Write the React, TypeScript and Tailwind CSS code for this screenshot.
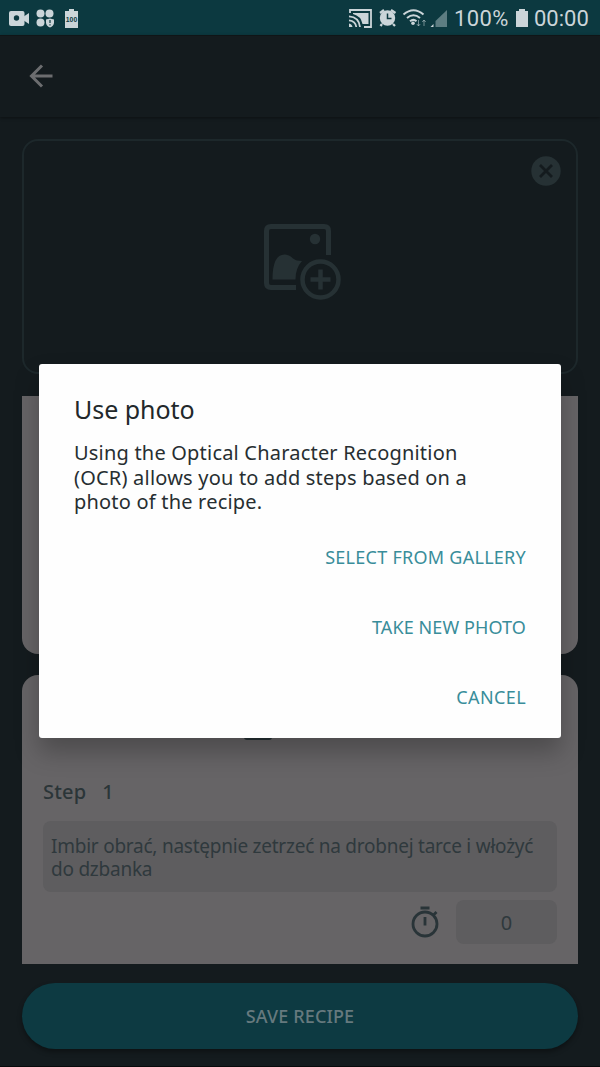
import type { ReactNode } from "react";

function StatusBar() {
  return (
    <div className="flex h-[35px] shrink-0 items-center bg-[#0c3940] text-[#cbd5d9]">
      <svg className="ml-2 h-[35px] w-[76px]" viewBox="8 0 76 35" fill="#cbd5d9">
        <rect x="9" y="11" width="15.5" height="15" rx="2" />
        <path d="M23 17 29 13V24L23 20Z" />
        <circle cx="16.5" cy="18" r="2.7" fill="#0c3940" />
        <circle cx="40.5" cy="13.5" r="4" />
        <circle cx="49.5" cy="13.5" r="4" />
        <circle cx="40.5" cy="22.5" r="4" />
        <path d="M46 19.5 50 18.5 54 19.5V23Q53.5 26 50 27.5Q46.5 26 46 23Z" />
        <path d="M50 20V23M50 24.2V25.5" stroke="#0c3940" strokeWidth="1.2" />
        <path d="M65 11H69V9H74V11H78V28H65Z" />
        <text x="71.5" y="21.5" textAnchor="middle" fontSize="6.8" fontWeight="700" fill="#0c3940" fontFamily="Liberation Sans, sans-serif">100</text>
      </svg>
      <svg className="ml-auto h-[35px] w-[103px]" viewBox="347 0 103 35" fill="none" stroke="#cbd5d9">
        <path d="M350 13V10H371V27H364" strokeWidth="1.8" />
        <path d="M353 14V13H368.500V24H362.500Q361 16 353 14Z" fill="#cbd5d9" stroke="none" />
        <path d="M349 16.3Q359 17 360 27M349 20.3Q355.500 21 356.300 27" strokeWidth="1.8" />
        <path d="M349 23.500Q352 24 352.500 27H349Z" fill="#cbd5d9" stroke="none" />
        <circle cx="387.500" cy="18" r="7.700" fill="#cbd5d9" stroke="none" />
        <path d="M380 13 384 10M391 10 395.500 13M382 24 380.500 26M393 24 395 26" strokeWidth="2.300" />
        <path d="M387.500 13.500V18.500H391.500" stroke="#0c3940" strokeWidth="1.500" />
        <path d="M403.500 14.500Q413.500 6 423.500 14.500M407 18Q413.500 12.500 420 18M410 21.300Q413.500 18.500 416.500 21.300" strokeWidth="2" />
        <circle cx="413" cy="23.300" r="1.800" fill="#cbd5d9" stroke="none" />
        <path d="M418.500 20V26M416.800 24 418.500 26 420.200 24M424 26V20M422.300 22 424 20 425.700 22" strokeWidth="1" opacity=".55" />
        <path d="M433.500 24V27H430.500Z" fill="#cbd5d9" stroke="none" />
        <path d="M447 10V27H435.500V21Z" fill="#5d7d82" stroke="none" />
      </svg>
      <span className="ml-[4px] w-[56px] whitespace-nowrap pt-[3px] font-[Roboto] text-[22px] leading-[32px] tracking-[0.4px]">100%</span>
      <svg className="ml-[6px] h-[35px] w-3" viewBox="516 0 12 35" fill="#cbd5d9">
        <path d="M516 11H519V9H525V11H528V27H516Z" />
      </svg>
      <span className="ml-[6px] w-[66px] whitespace-nowrap pt-[3px] font-[Roboto] text-[22px] leading-[32px]">00:00</span>
    </div>
  );
}

function PhotoCard() {
  return (
    <section className="relative flex h-[235px] shrink-0 items-center justify-center rounded-[16px] border-2 border-[#1d282b]">
      <svg className="ml-1 mt-[8px] h-[80px] w-[80px]" viewBox="262 221 80 80" fill="none" stroke="#263134">
        <path d="M296 287.500H271Q266.500 287.500 266.500 283V231Q266.500 226.500 271 226.500H324Q328.500 226.500 328.500 231V255" strokeWidth="5" />
        <circle cx="315" cy="239" r="5.200" fill="#263134" stroke="none" />
        <path d="M272.500 279.500Q272.500 254 285 254.500Q290 255 293 258.500Q296 261 302 261Q295.500 268 295.500 279.500Z" fill="#263134" stroke="none" />
        <circle cx="320.500" cy="279.500" r="18" strokeWidth="4.500" />
        <path d="M320.500 269.500V289.500M310.500 279.500H330.500" strokeWidth="4.500" />
      </svg>
      <svg className="absolute right-[15px] top-[15px] size-[30px]" viewBox="0 0 30 30">
        <circle cx="15" cy="15" r="14.700" fill="#263134" />
        <path d="M9 9 21 21M21 9 9 21" stroke="#141b1e" strokeWidth="2.800" />
      </svg>
    </section>
  );
}

function StepCard() {
  return (
    <section className="mt-[21px] flex h-[289px] shrink-0 flex-col rounded-t-[16px] bg-[#666466] px-[21px]">
      <div className="ml-[201px] mt-[62px] h-[3px] w-[28px] shrink-0 rounded-b bg-[#263134]" />
      <h2 className="mt-[38px] flex h-7 items-center gap-[16px] text-[20px] font-medium leading-7 tracking-[0.2px] text-[#2b3538]">
        <span>Step</span>
        <span>1</span>
      </h2>
      <div className="mt-[15px] h-[71px] shrink-0 rounded-lg bg-[#5e5d5f] pl-2 pt-[14px] text-[19px] leading-[23px] tracking-[-0.24px] text-[#2f393d]">
        <p className="whitespace-nowrap">Imbir obrać, następnie zetrzeć na drobnej tarce i włożyć</p>
        <p>do dzbanka</p>
      </div>
      <div className="mt-[8px] flex h-[44px] items-center justify-end gap-[16px]">
        <svg className="h-[34px] w-[30px]" viewBox="0 0 30 34" fill="none" stroke="#293438" strokeWidth="2.800">
          <circle cx="15" cy="19" r="12" />
          <path d="M10.500 3H19.500M15 12V20.500M23 10.500 26.500 7" />
        </svg>
        <div className="flex h-full w-[101px] items-center justify-center rounded-lg bg-[#5e5d5f] pt-[2px] text-[20px] text-[#2f393d]">0</div>
      </div>
    </section>
  );
}

function DialogAction({ children, className }: { children: ReactNode; className: string }) {
  return (
    <button className={`h-[70px] whitespace-nowrap text-[18px] leading-[70px] text-[#398d9a] ${className}`}>
      {children}
    </button>
  );
}

function PhotoDialog() {
  return (
    <div className="absolute inset-0 flex flex-col items-center pt-[364px]">
      <div role="dialog" className="flex h-[374px] w-[522px] flex-col rounded-[3px] bg-[#fefefe] px-[35px] shadow-[0_14px_24px_rgba(0,0,0,0.25)]">
        <h1 className="mt-[27px] h-9 whitespace-nowrap text-[25px] leading-9 tracking-[-0.05px] text-[#22282b]">Use photo</h1>
        <div className="mt-[14px] h-[73px] whitespace-nowrap text-[20px] leading-[24.500px] tracking-[0.2px] text-[#272e31]">
          <p>Using the Optical Character Recognition</p>
          <p>(OCR) allows you to add steps based on a</p>
          <p>photo of the recipe.</p>
        </div>
        <div className="mt-[8px] flex flex-col items-end">
          <DialogAction className="tracking-[0.26px]">SELECT FROM GALLERY</DialogAction>
          <DialogAction className="tracking-[0.1px]">TAKE NEW PHOTO</DialogAction>
          <DialogAction className="tracking-[0.4px]">CANCEL</DialogAction>
        </div>
      </div>
    </div>
  );
}

export default function App() {
  return (
    <div className="relative flex h-[1067px] w-[600px] flex-col overflow-hidden border-b border-[#080a0b] bg-[#141b1e] font-['Noto_Sans',sans-serif]">
      <StatusBar />
      <header className="flex h-[82px] shrink-0 items-center border-t border-[#101517] pb-[2px] pl-[28px] shadow-[0_1px_3px_rgba(0,0,0,0.4)]">
        <svg className="size-[26px]" viewBox="0 0 26 26" fill="none" stroke="#6c6d6f" strokeWidth="3">
          <path d="M24.500 13H4M14 2.500 3.500 13 14 23.500" />
        </svg>
      </header>
      <main className="flex flex-col px-[22px] pt-[22px]">
        <PhotoCard />
        <section className="mt-[22px] h-[258px] shrink-0 rounded-b-[16px] bg-[#666466]" />
        <StepCard />
        <button className="mt-[19px] h-[66px] shrink-0 rounded-full bg-[#0d3a42] text-[18px] font-medium tracking-[0.15px] text-[#66797e] shadow-[0_3px_5px_rgba(0,0,0,0.35)]">
          SAVE RECIPE
        </button>
      </main>
      <PhotoDialog />
    </div>
  );
}
